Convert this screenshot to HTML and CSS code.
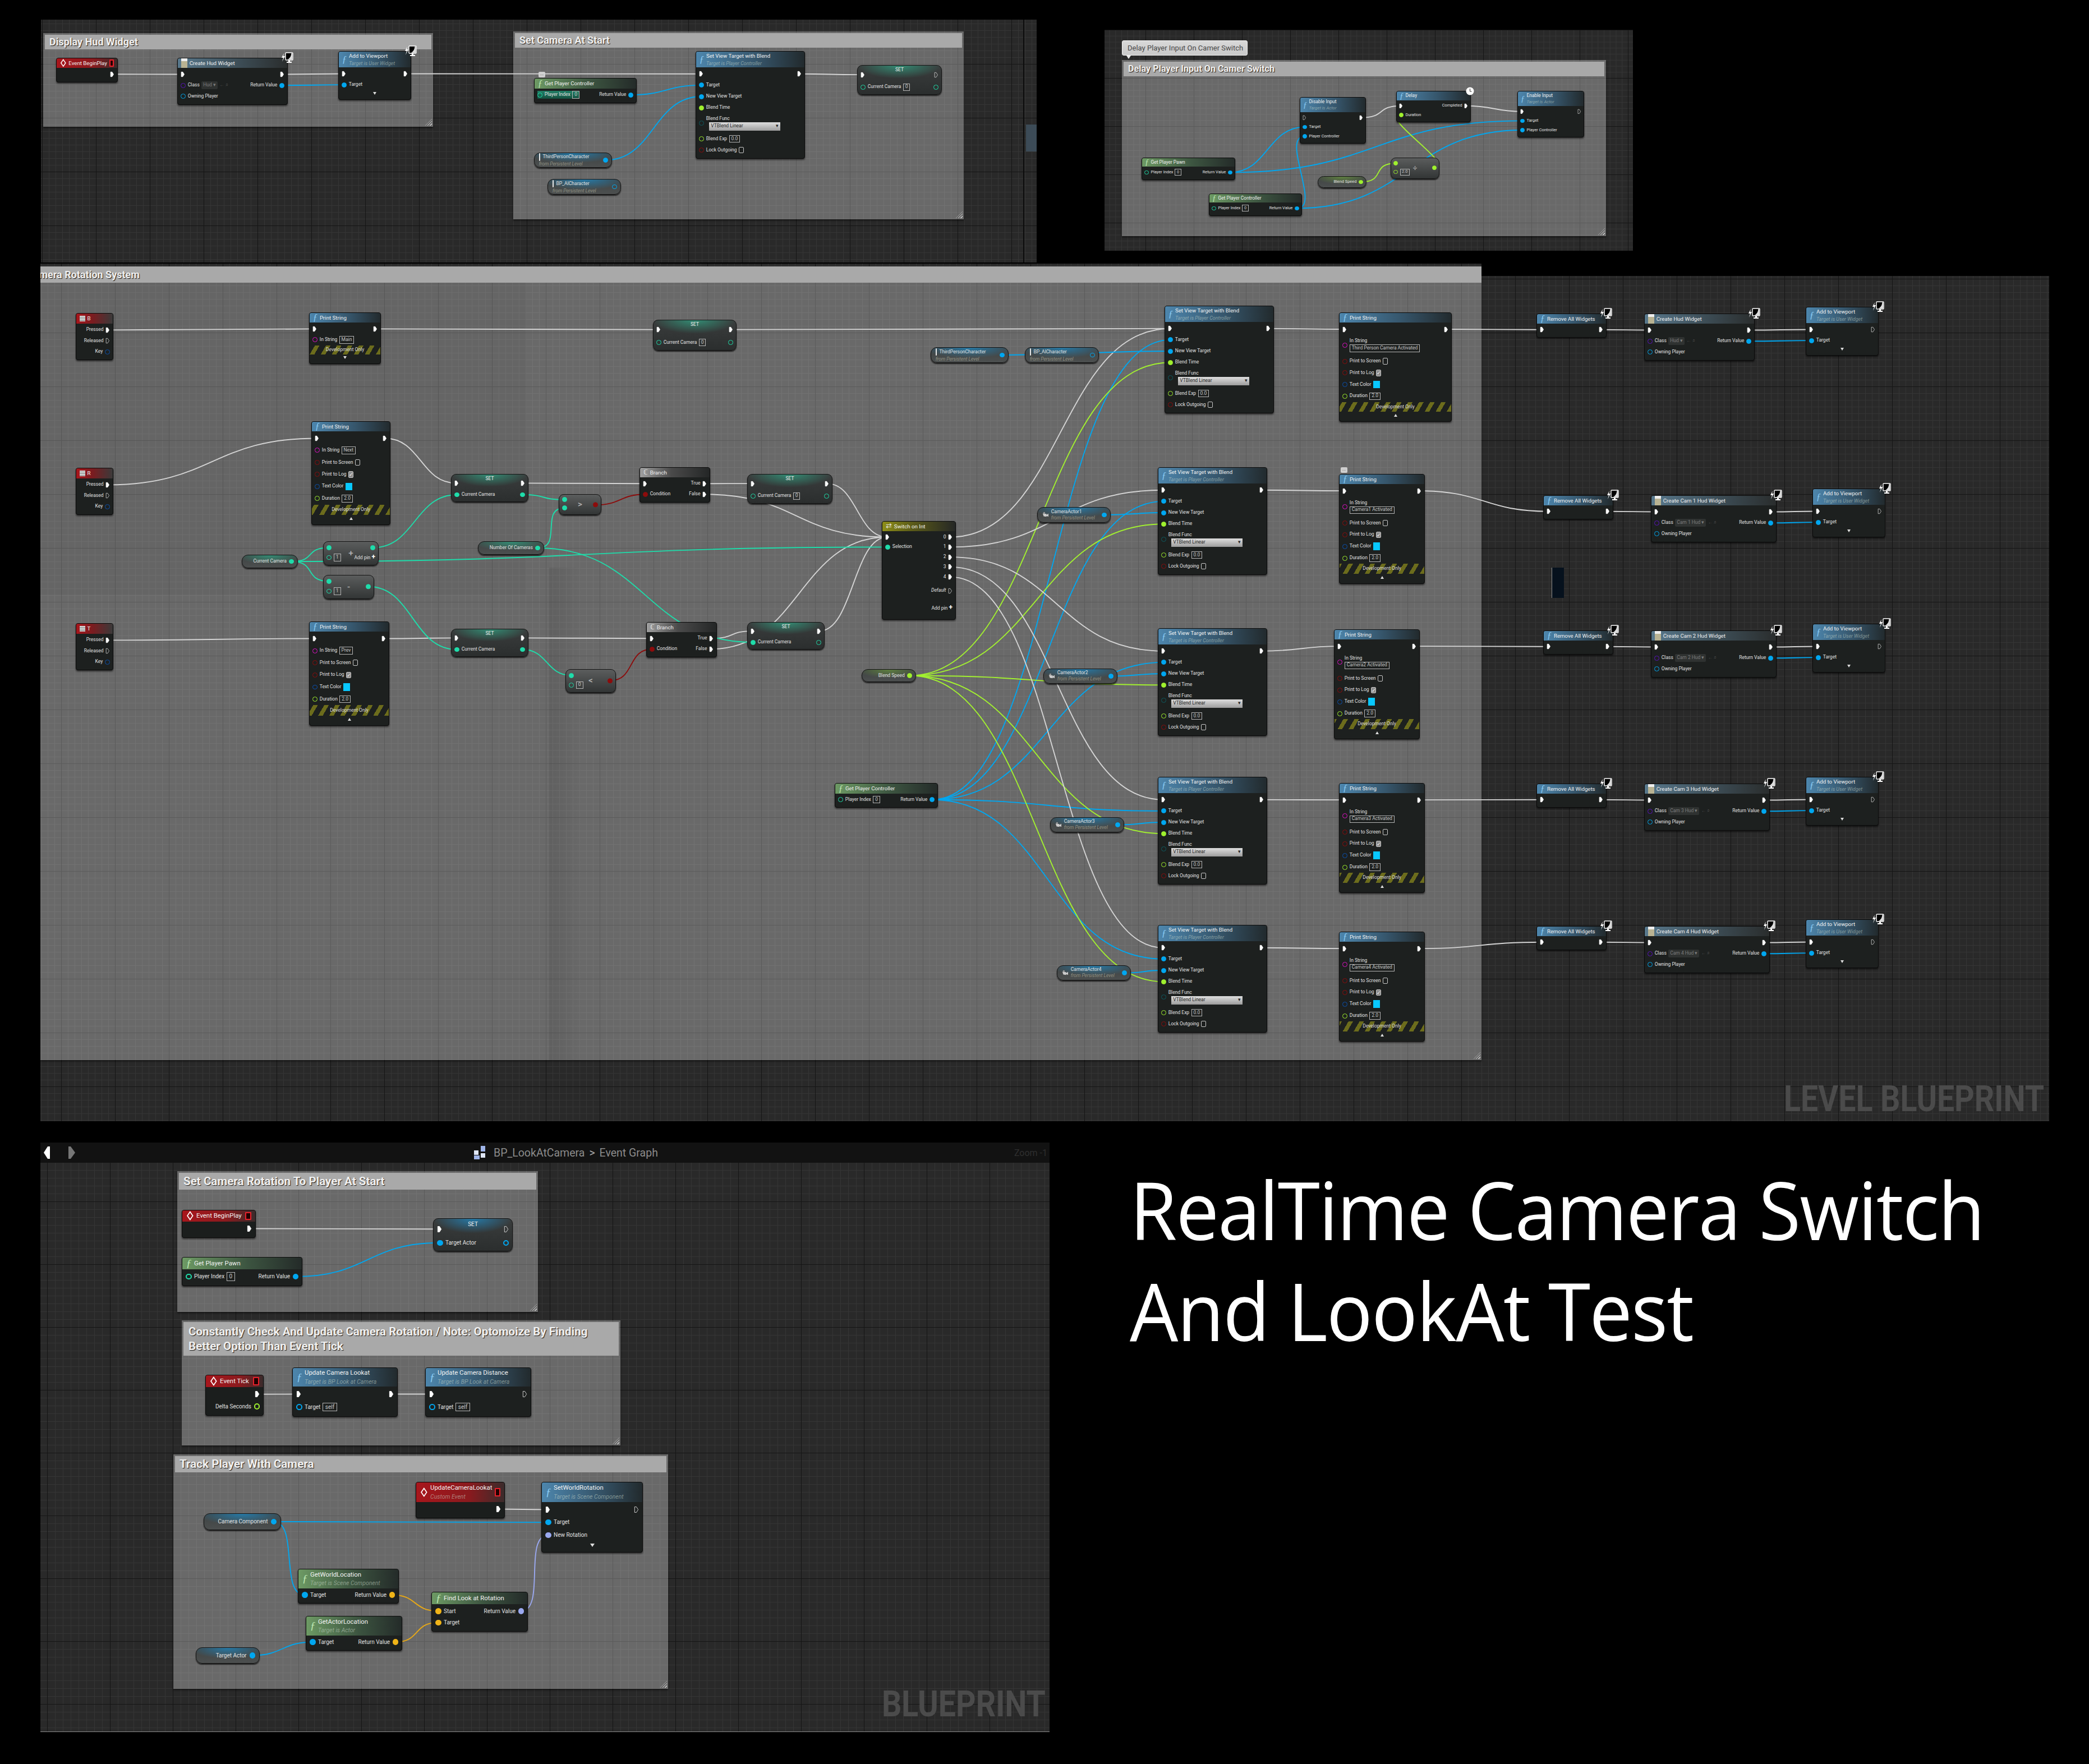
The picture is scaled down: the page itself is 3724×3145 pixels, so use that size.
FILE: index.html
```html
<!DOCTYPE html>
<html lang="en">

<head>
    <meta charset="UTF-8" />
    <title>RealTime Camera Switch And LookAt Test</title>
    <link rel="stylesheet" href="styles.css">
</head>

<body>
    <div id="stage">
        <div class="panel panel-a"></div>
        <div class="divider-a"></div>
        <div class="scroll-a"></div>
        <div class="panel panel-b"></div>
        <div class="panel panel-top"></div>
        <div class="panel panel-c"></div>
        <div class="panel panel-d">
            <div class="graph-bar">
                <svg class="nav" viewBox="0 0 60 26">
                    <path d="M2 13 9 2h4v22H9z" fill="#fff" />
                    <path d="M58 13 50 2h-4v22h4z" fill="#777" />
                </svg>
                <div class="crumb">
                    <svg class="bp-icon" viewBox="0 0 24 26">
                        <rect x="14" y="1" width="8" height="10" fill="#9fb4e8" />
                        <rect x="2" y="9" width="8" height="8" fill="#dfe6f6" />
                        <rect x="14" y="14" width="8" height="8" fill="#dfe6f6" />
                        <rect x="2" y="18" width="10" height="7" fill="#9fb4e8" />
                    </svg>
                    <span>BP_LookAtCamera</span>
                    <span class="sep">&gt;</span>
                    <span>Event Graph</span>
                </div>
                <div class="zoom-label">Zoom -1</div>
            </div>
        </div>

        <div class="comment cm-hud"><h3>Display Hud Widget</h3></div>
        <div class="comment cm-start"><h3>Set Camera At Start</h3></div>
        <div class="comment cm-delay"><h3>Delay Player Input On Camer Switch</h3></div>
        <div class="comment cm-system"><h3>Camera Rotation System</h3></div>
        <div class="shade shade-1"></div>
        <div class="shade shade-2"></div>
        <div class="comment big cm-rotation"><h3>Set Camera Rotation To Player At Start</h3></div>
        <div class="comment big cm-tick"><h3>Constantly Check And Update Camera Rotation / Note: Optomoize By Finding Better Option Than Event Tick</h3></div>
        <div class="comment big cm-track"><h3>Track Player With Camera</h3></div>

        <div class="bubble">Delay Player Input On Camer Switch</div>
        <div class="note note-1">...</div>
        <div class="note note-2">...</div>
        <div class="black-bar"></div>

        <svg id="wires" width="3724" height="3145"></svg>
        <div id="nodes"></div>

        <div class="mark mark-level">LEVEL BLUEPRINT</div>
        <div class="mark mark-bp">BLUEPRINT</div>
        <h1 class="headline">RealTime Camera Switch<br>And LookAt Test</h1>
    </div>

    <script src="script.js"></script>
</body>

</html>
```

FILE: styles.css
```css
body {
    margin: 0;
    background: #000;
}

#stage {
    position: relative;
    width: 3724px;
    height: 3145px;
    overflow: hidden;
    background: #000;
    font-family: Roboto, sans-serif;
}

/* graph panels */
.panel {
    position: absolute;
    background-color: #292929;
    background-image:
        linear-gradient(90deg, #151515 1px, transparent 1px),
        linear-gradient(#151515 1px, transparent 1px),
        linear-gradient(90deg, #353535 1px, transparent 1px),
        linear-gradient(#353535 1px, transparent 1px);
    background-size: 96px 96px, 96px 96px, 12px 12px, 12px 12px;
}

.panel-a {
    left: 73px;
    top: 35px;
    width: 1775px;
    height: 433px;
    background-position: 2px 79px, 2px 79px, 2px 7px, 2px 7px;
}

.divider-a {
    position: absolute;
    left: 1824px;
    top: 35px;
    width: 2px;
    height: 433px;
    background: #0c0c0c;
}

.scroll-a {
    position: absolute;
    left: 1829px;
    top: 222px;
    width: 19px;
    height: 48px;
    background: #3c4b57;
}

.panel-b {
    left: 1969px;
    top: 53px;
    width: 942px;
    height: 394px;
    background-size: 86px 86px, 86px 86px, 10.75px 10.75px, 10.75px 10.75px;
    background-position: 73px 0, 73px 0, 73px 0, 73px 0;
}

.panel-top {
    left: 72px;
    top: 470px;
    width: 2569px;
    height: 22px;
    background-position: 37px 27px, 37px 27px, 1px 3px, 1px 3px;
}

.panel-c {
    left: 72px;
    top: 492px;
    width: 3581px;
    height: 1507px;
    background-position: 37px 5px, 37px 5px, 1px 5px, 1px 5px;
}

.panel-d {
    left: 72px;
    top: 2037px;
    width: 1799px;
    height: 1050px;
    border-bottom: 1px solid #8a8a8a;
    background-size: 112px 112px, 112px 112px, 14px 14px, 14px 14px;
    background-position: 236px 105px, 236px 105px, 12px 7px, 12px 7px;
}

.graph-bar {
    display: flex;
    align-items: center;
    height: 36px;
    padding: 0 4px 0 4px;
    background: #121212;
    color: #8b8b8b;
    font-size: 19.5px;
}

.nav {
    width: 60px;
    height: 26px;
}

.crumb {
    display: flex;
    align-items: center;
    gap: 8px;
    margin-left: 706px;
}

.bp-icon {
    width: 26px;
    height: 26px;
    margin-right: 4px;
}

.sep {
    color: #aaa;
}

.zoom-label {
    margin-left: auto;
    color: #2f2f2f;
    font-size: 16px;
}

/* comment boxes */
.comment {
    position: absolute;
    overflow: hidden;
    background: rgba(255, 255, 255, 0.3);
    box-shadow: 0 2px 3px rgba(0, 0, 0, 0.55);
}

.comment::after {
    content: '';
    position: absolute;
    right: 2px;
    bottom: 2px;
    width: 12px;
    height: 12px;
    background: repeating-linear-gradient(135deg, transparent 0 2px, #ccc 2px 3px);
    clip-path: polygon(100% 0, 100% 100%, 0 100%);
}

.comment h3 {
    margin: 3px 3px 0 3px;
    padding-left: 8px;
    background: #a9a9a9;
    color: #f0f0f0;
    font-size: 18px;
    font-weight: 700;
    text-shadow: 1px 1px 1px rgba(0, 0, 0, 0.85);
    line-height: 26px;
}

.comment.big h3 {
    font-size: 20.6px;
    line-height: 26px;
}

.cm-hud {
    left: 77px;
    top: 59px;
    width: 695px;
    height: 167px;
}

.cm-start {
    left: 915px;
    top: 56px;
    width: 803px;
    height: 335px;
}

.cm-delay {
    left: 2000px;
    top: 107px;
    width: 863px;
    height: 314px;
}

.cm-delay h3 {
    font-size: 16.2px;
}

.cm-system {
    left: 72px;
    top: 475px;
    width: 2569px;
    height: 1415px;
}

.cm-system h3 {
    margin: 0 0 0 0;
    padding-left: 0;
    text-indent: -24px;
    line-height: 29px;
}

.cm-rotation {
    left: 316px;
    top: 2088px;
    width: 643px;
    height: 251px;
}

.comment.cm-rotation h3 {
    line-height: 30px;
}

.cm-tick {
    left: 324px;
    top: 2354px;
    width: 782px;
    height: 223px;
}

.cm-tick h3 {
    padding: 4px 20px 4px 9px;
}

.cm-track {
    left: 309px;
    top: 2593px;
    width: 882px;
    height: 418px;
}

.comment.cm-track h3 {
    line-height: 29px;
}

.shade {
    position: absolute;
}

.shade-1 {
    left: 72px;
    top: 504px;
    width: 866px;
    height: 556px;
    background: rgba(0, 0, 0, 0.035);
}

.shade-2 {
    left: 979px;
    top: 1012px;
    width: 60px;
    height: 878px;
    background: linear-gradient(90deg, rgba(0, 0, 0, 0.09), transparent);
}

.bubble {
    position: absolute;
    left: 2000px;
    top: 72px;
    width: 224px;
    height: 27px;
    box-sizing: border-box;
    padding-left: 9px;
    border: 1px solid #f4f4f4;
    border-radius: 3px;
    background: linear-gradient(#d8d8d8, #c8c8c8);
    color: #484848;
    font-size: 13px;
    line-height: 25px;
}

.bubble::after {
    content: '';
    position: absolute;
    left: 7px;
    top: 26px;
    border: 4px solid transparent;
    border-top: 6px solid #e8e8e8;
}

.note {
    position: absolute;
    width: 12px;
    height: 10px;
    border-radius: 2px;
    background: #cfcfcf;
    color: #555;
    font-size: 8px;
    line-height: 7px;
    text-align: center;
}

.note-1 {
    left: 960px;
    top: 128px;
}

.note-2 {
    left: 2390px;
    top: 833px;
}

.black-bar {
    position: absolute;
    left: 2766px;
    top: 1012px;
    width: 21px;
    height: 54px;
    border-left: 1px solid #8d8d8d;
    background: #06111d;
}

/* wires */
#wires {
    position: absolute;
    left: 0;
    top: 0;
}

#wires path {
    fill: none;
    stroke-width: 1.9;
}

/* nodes */
.node {
    position: absolute;
    display: flex;
    flex-direction: column;
    box-sizing: border-box;
    border: 1px solid #0b0b0b;
    border-radius: 4px;
    background: #1d201f;
    box-shadow: 0 2px 3px rgba(0, 0, 0, 0.6);
    color: #e2e2e2;
    font-size: 8.5px;
    line-height: 1.15;
    white-space: nowrap;
}

.node.sm {
    font-size: 7.4px;
}

.node.lg {
    font-size: 10px;
}

.head {
    display: flex;
    flex: none;
    align-items: center;
    gap: 0.4em;
    padding: 0 0.6em;
    border-radius: 3px 3px 0 0;
    font-size: 1.14em;
    position: relative;
}

.head b {
    display: block;
    font-weight: 400;
    color: #f2f2f2;
}

.head small {
    display: block;
    margin-top: 0.3em;
    font-size: 0.92em;
    font-style: italic;
    color: rgba(200, 215, 200, 0.55);
}

.fx {
    font-family: "Liberation Serif", serif;
    font-size: 1.7em;
    line-height: 1;
    font-style: italic;
    color: #8ccdf5;
}

.fn .head {
    background: linear-gradient(90deg, #4d86ad, #36566c 55%, #222a2d);
}

.pure .head {
    background: linear-gradient(90deg, #6d9a64, #3c5440 55%, #242b29);
}

.pure .fx {
    color: #bfe8b4;
}

.event .head,
.key .head {
    background: linear-gradient(90deg, #a8161c, #8a1a1e 60%, #3b2b2b);
}

.key .head {
    background: linear-gradient(90deg, #a8161c, #7a1c20 45%, #3a3a3a);
}

.event {
    background: #1b1e1d;
}

.widget .head {
    background: linear-gradient(90deg, #58788c, #3b4a52 60%, #2a2d2d);
}

.branch .head {
    background: linear-gradient(90deg, #a0a0a0, #4a4a4a 45%, #242626);
}

.switch .head {
    background: linear-gradient(90deg, #8e8e18, #5c5c18 40%, #252725);
}

.flag {
    margin-left: auto;
    width: 0.6em;
    height: 0.9em;
    border: 0.22em solid #e5202a;
    border-radius: 1px;
    background: #200;
}

.diamond {
    width: 1.2em;
    height: 1.5em;
    flex: none;
}

.wicon {
    width: 1.15em;
    height: 1.8em;
    flex: none;
    background: linear-gradient(#eee 30%, #b9b393 30%);
}

.keyicon {
    width: 1em;
    height: 1em;
    flex: none;
    background: repeating-linear-gradient(#ddd 0 2px, #777 2px 3px);
}

.swicon {
    font-size: 1.3em;
    line-height: 1;
}

.body {
    display: flex;
    flex: 1;
    min-height: 0;
    flex-direction: column;
    padding: 0.2em 0 0.5em;
}

.row {
    display: flex;
    flex: 1 1 0;
    min-height: 0;
    align-items: center;
    justify-content: space-between;
    padding: 0 0.6em;
}

.row.tall {
    flex: 1.75 1 0;
}

.side {
    display: flex;
    align-items: center;
    gap: 0.45em;
}

.lab {
    display: flex;
    align-items: center;
    gap: 0.4em;
}

.stack .lab {
    flex-direction: column;
    align-items: flex-start;
    gap: 0.15em;
}

.hl .side:first-child {
    background: linear-gradient(#218067, #14503f);
}

.mid .side:last-child .pin {
    transform: translateY(1.1em);
}

.dev {
    flex: 0.85 1 0;
    justify-content: center;
    padding: 0;
    background: repeating-linear-gradient(-60deg, #6c6c1c 0 7px, #1d201f 7px 17px);
    color: #ddd;
}

.tri {
    flex: 0.6 1 0;
    justify-content: center;
}

.tri::before {
    content: '';
    border: 0.4em solid transparent;
}

.tri.up::before {
    border-bottom: 0.6em solid #ddd;
    border-top-width: 0;
}

.tri.down::before {
    border-top: 0.6em solid #ddd;
    border-bottom-width: 0;
}

/* pins */
.pin {
    flex: none;
    display: block;
}

.exec {
    width: 0.9em;
    height: 1.3em;
}

.exec path {
    fill: #fff;
    stroke: #fff;
}

.exec path.open {
    fill: none;
    stroke: #ddd;
}

.dot {
    box-sizing: border-box;
    width: 1.05em;
    height: 1.05em;
    border: 0.2em solid var(--pc);
    border-radius: 50%;
    background: var(--pc);
}

.dot.open {
    background: transparent;
}

.t-b {
    --pc: #00a7f0;
}

.t-c {
    --pc: #1fdcaa;
}

.t-g {
    --pc: #9ff02e;
}

.t-r {
    --pc: #8c0c0c;
}

.t-m {
    --pc: #e010c8;
}

.t-n {
    --pc: #0a50b0;
}

.t-p {
    --pc: #5a12c0;
}

.t-y {
    --pc: #f0b418;
}

.t-v {
    --pc: #9aa8f0;
}

.t-d {
    --pc: #0c5a60;
}

/* pin widgets */
.box {
    padding: 0.1em 0.35em;
    border: 1px solid #b5b5b5;
    color: #c8c8c8;
}

.check {
    box-sizing: border-box;
    display: block;
    width: 1.1em;
    height: 1.35em;
    border: 1px solid #c8c8c8;
    border-radius: 2px;
}

.check.on {
    background: #8c8c8c;
    color: #fff;
    font-size: 1em;
    line-height: 1.2;
    text-align: center;
}

.swatch {
    display: block;
    width: 1.5em;
    height: 1.6em;
    background: #08c8ff;
}

.drop {
    display: flex;
    align-items: center;
    justify-content: space-between;
    box-sizing: border-box;
    width: 15em;
    height: 1.7em;
    margin-left: 0.6em;
    padding: 0 0.4em;
    background: linear-gradient(#dedede, #9d9d9d);
    color: #222;
}

.cls {
    padding: 0.25em 0.35em;
    border-radius: 2px;
    background: #2f3231;
    color: #7d7d7d;
}

.dim {
    color: #4a4a4a;
}

.plus {
    color: #fff;
    font-size: 1.4em;
    font-weight: 700;
    line-height: 0.8;
}

/* variable, set and math nodes */
.set,
.var,
.op {
    border: 1px solid #141414;
    border-radius: 9px;
    box-shadow: 0 2px 2px rgba(0, 0, 0, 0.7);
}

.set {
    background:
        radial-gradient(ellipse 50% 45% at 50% 0, var(--glow), transparent),
        linear-gradient(#3a3d3d, #2b2e2e);
}

.set .body {
    padding: 0.6em 0 0.2em;
}

.settitle {
    position: absolute;
    top: 0.35em;
    left: 0;
    right: 0;
    text-align: center;
    color: #f0f0f0;
}

.op {
    background: linear-gradient(#5b5d5d, #323535);
}

.opsym {
    position: absolute;
    left: 50%;
    top: 50%;
    transform: translate(-50%, -50%);
    color: #b5b5b5;
    font-size: 1.8em;
    font-weight: 500;
}

.var {
    flex-direction: row;
    align-items: center;
    justify-content: flex-end;
    gap: 0.5em;
    padding-right: 0.7em;
    border-radius: 11px;
    background:
        radial-gradient(ellipse 60% 70% at 50% 0, var(--glow), transparent),
        linear-gradient(#3e4242, #4c4f4f);
}

.var.left {
    justify-content: flex-start;
    padding-left: 0.9em;
}

.var.left .pin {
    margin-left: auto;
}

.var small {
    display: block;
    margin-top: 0.15em;
    font-style: italic;
    font-size: 1em;
    color: rgba(215, 215, 190, 0.5);
}

.var-text {
    position: relative;
}

.actor {
    display: inline-block;
    width: 0.3em;
    height: 1.6em;
    margin-right: 0.5em;
    border-radius: 2px;
    background: #e8e8e8;
    vertical-align: middle;
}

.camicon {
    width: 1.4em;
    height: 1.4em;
    flex: none;
}

.glow-b {
    --glow: rgba(30, 140, 200, 0.75);
}

.glow-c {
    --glow: rgba(45, 190, 150, 0.6);
}

.glow-g {
    --glow: rgba(120, 180, 60, 0.55);
}

/* badges */
.monitor {
    position: absolute;
    top: -11px;
    right: -11px;
    width: 22px;
    height: 20px;
}

.clock {
    position: absolute;
    top: -8px;
    right: -7px;
    width: 15px;
    height: 15px;
}

/* captions */
.mark {
    position: absolute;
    color: #4b4b4b;
    font-size: 64px;
    font-weight: 700;
    line-height: 1;
    transform-origin: 0 0;
    white-space: nowrap;
}

.mark-level {
    left: 3180px;
    top: 1928px;
    transform: scaleX(0.865);
}

.mark-bp {
    left: 1572px;
    top: 3007px;
    transform: scaleX(0.865);
}

.headline {
    position: absolute;
    left: 2014px;
    top: 2066px;
    margin: 0;
    color: #fff;
    font-family: "Open Sans", sans-serif;
    font-size: 143px;
    font-weight: 400;
    line-height: 180px;
    letter-spacing: -2px;
    transform: scaleX(0.955);
    transform-origin: 0 0;
    white-space: nowrap;
}
```

FILE: script.js
```js
// Nodes and wires of the three graphs, positions are stage pixels.
// Pin letters: lower case = connected (filled), upper case = not connected.
const WIRE = { x: '#d4d4d4', b: '#00a7f0', c: '#1fdcaa', g: '#a2f030', r: '#8c0c0c', y: '#e6a818', v: '#9aa8f0' };

const list = [];
const wires = [];
let size = '';

function pin(id, type) {
    if (!type) return '';
    const low = type.toLowerCase();
    const open = type !== low;
    if (low === 'x') {
        return `<svg class="pin exec" data-pin="${id}" viewBox="0 0 10 14"><path class="${open ? 'open' : ''}" d="M1.5 1.5h3.5l3.5 5.5-3.5 5.5H1.5z"/></svg>`;
    }
    return `<span class="pin dot t-${low}${open ? ' open' : ''}" data-pin="${id}"></span>`;
}

const box = t => `<span class="box">${t}</span>`;
const check = on => on ? '<span class="check on">&#10003;</span>' : '<span class="check"></span>';
const swatch = '<span class="swatch"></span>';
const drop = '<span class="drop">VTBlend Linear<span>&#9662;</span></span>';
const cls = t => `<span class="cls">${t} &#9662;</span><span class="dim">&#8592; &#8981;</span>`;

const xx = ['x', '', '', '', 'x'];
const xX = ['x', '', '', '', 'X'];
const dev = { dev: 1 };
const up = { tri: 'up' };
const down = { tri: 'down' };

const DIAMOND = '<svg class="diamond" viewBox="0 0 12 16"><path d="M6 1.5 10.5 8 6 14.5 1.5 8z" fill="none" stroke="#fff" stroke-width="1.6"/></svg>';
const MONITOR = '<svg class="monitor" viewBox="0 0 22 20"><path d="M5 2 1 10h3l-2 7 5-10H4z" fill="#fff"/><rect x="8" y="1" width="13" height="13" rx="1" fill="#000" stroke="#fff" stroke-width="1.4"/><path d="M20.3 1.8v11.5h-8.5c4-2.500 6.500-6.500 6.500-11.500z" fill="#ddd"/><rect x="13" y="14" width="3" height="3" fill="#fff"/><rect x="10" y="17" width="9" height="2" fill="#fff"/></svg>';
const CLOCK = '<svg class="clock" viewBox="0 0 15 15"><circle cx="7.5" cy="7.5" r="7" fill="#fff"/><path d="M7.5 3v5h3" fill="none" stroke="#333"/></svg>';
const CAMERA = '<svg class="camicon" viewBox="0 0 14 14"><path d="M1 4l8 1v6L3 10zM9 7l4-3v7L9 9z" fill="#ccc"/><circle cx="4" cy="3" r="2" fill="#999"/></svg>';

const ICONS = {
    fn: '<i class="fx">&#402;</i>',
    pure: '<i class="fx">&#402;</i>',
    event: DIAMOND,
    widget: '<span class="wicon"></span>',
    key: '<span class="keyicon"></span>',
    branch: '<span class="swicon">&#8450;</span>',
    switch: '<span class="swicon">&#8644;</span>'
};

function rowHtml(id, i, r) {
    if (r.dev) return '<div class="row dev"><span>Development Only</span></div>';
    if (r.tri) return `<div class="row tri ${r.tri}"></div>`;
    const [lp, ll = '', w = '', rl = '', rp, c = ''] = r;
    const lab = ll || w ? `<div class="lab">${ll ? `<span>${ll}</span>` : ''}${w}</div>` : '';
    return `<div class="row ${c}"><div class="side">${pin(`${id}.L${i}`, lp)}${lab}</div>` +
        `<div class="side">${rl ? `<span>${rl}</span>` : ''}${pin(`${id}.R${i}`, rp)}</div></div>`;
}

// standard node: kind, id, left, top, width, height, title bar height, title, subtitle, rows, extras
function N(k, id, x, y, w, h, t, title, sub, rows, extra = '') {
    const flag = extra.includes('flag') ? '<span class="flag"></span>' : '';
    const badge = extra.includes('mon') ? MONITOR : extra.includes('clock') ? CLOCK : '';
    const head = `<div class="head" style="height:${t}px">${ICONS[k] || ''}<div><b>${title}</b>${sub ? `<small>${sub}</small>` : ''}</div>${flag}</div>`;
    const body = `<div class="body">${rows.map((r, i) => rowHtml(id, i, r)).join('')}</div>`;
    list.push(`<div class="node ${k} ${size}" style="left:${x}px;top:${y}px;width:${w}px;height:${h}px">${head}${body}${badge}</div>`);
}

function SET(id, x, y, w, h, rows, glow = 'c') {
    list.push(`<div class="node set glow-${glow} ${size}" style="left:${x}px;top:${y}px;width:${w}px;height:${h}px"><div class="body">${rows.map((r, i) => rowHtml(id, i, r)).join('')}</div><div class="settitle">SET</div></div>`);
}

function OP(id, x, y, w, h, sym, rows) {
    list.push(`<div class="node op ${size}" style="left:${x}px;top:${y}px;width:${w}px;height:${h}px"><div class="body">${rows.map((r, i) => rowHtml(id, i, r)).join('')}</div><div class="opsym">${sym}</div></div>`);
}

function VAR(id, x, y, w, h, label, sub, p, icon = '') {
    const glow = p.toLowerCase();
    const ico = icon === 'cam' ? CAMERA : icon === 'pawn' ? '<span class="actor"></span>' : '';
    list.push(`<div class="node var glow-${glow} ${sub ? 'left' : ''} ${size}" style="left:${x}px;top:${y}px;width:${w}px;height:${h}px">` +
        `${icon === 'cam' ? ico : ''}<div class="var-text">${icon === 'pawn' ? ico : ''}${label}${sub ? `<small>${sub}</small>` : ''}</div>${pin(`${id}.R0`, p)}</div>`);
}

const W = (a, b, c = 'x') => wires.push([a, b, c]);

const SVT = (id, x, y) => N('fn', id, x, y, 195, 192, 28, 'Set View Target with Blend', 'Target is Player Controller', [
    xx, ['b', 'Target'], ['b', 'New View Target'], ['g', 'Blend Time'],
    ['D', 'Blend Func', drop, '', '', 'tall stack'], ['G', 'Blend Exp', box('0.0')], ['R', 'Lock Outgoing', check(0)]
]);

const PRINT = (id, x, y, w, h, text, stacked) => N('fn', id, x, y, w, h, 17, 'Print String', '', [
    xx, ['M', 'In String', box(text), '', '', stacked ? 'tall stack' : ''],
    ['R', 'Print to Screen', check(0)], ['R', 'Print to Log', check(1)],
    ['N', 'Text Color', swatch], ['G', 'Duration', box('2.0')], dev, up
]);

const CREATE = (id, x, y, w, title, c) => N('widget', id, x, y, w, 84, 17, title, '', [
    xx, ['P', 'Class', cls(c), 'Return Value', 'b'], ['B', 'Owning Player']
], 'mon');

const ADDVP = (id, x, y, last) => N('fn', id, x, y, 130, 87, 28, 'Add to Viewport', 'Target is User Widget', [
    last ? xX : xx, ['b', 'Target'], down
], 'mon');

const KEY = (id, y, k) => N('key', id, 135, y, 67, 84, 18, k, '', [
    ['', '', '', 'Pressed', 'x'], ['', '', '', 'Released', 'X'], ['', '', '', 'Key', 'N']
]);

/* ---- top left graph ---- */
N('event', 'a1', 100, 103, 110, 44, 17, 'Event BeginPlay', '', [['', '', '', '', 'x']], 'flag');
CREATE('a2', 316, 103, 197, 'Create Hud Widget', 'Hud');
ADDVP('a3', 603, 91);
N('pure', 'a4', 952, 139, 183, 45, 18, 'Get Player Controller', '', [['C', 'Player Index', box('0'), 'Return Value', 'b', 'hl']]);
VAR('a6', 952, 272, 139, 27, 'ThirdPersonCharacter', 'from Persistent Level', 'b', 'pawn');
VAR('a8', 976, 319, 131, 28, 'BP_AICharacter', 'from Persistent Level', 'B', 'pawn');
SVT('a5', 1240, 91);
SET('a7', 1528, 116, 151, 53, [xX, ['C', 'Current Camera', box('0'), '', 'C']]);
W('a1.R0', 'a2.L0'); W('a2.R0', 'a3.L0'); W('a2.R1', 'a3.L1', 'b'); W('a3.R0', 'a5.L0');
W('a4.R0', 'a5.L1', 'b'); W('a6.R0', 'a5.L2', 'b'); W('a5.R0', 'a7.L0');

/* ---- delay graph ---- */
size = 'sm';
N('fn', 'b1', 2317, 173, 118, 83, 26, 'Disable Input', 'Target is Actor', [['X', '', '', '', 'x'], ['b', 'Target'], ['b', 'Player Controller']]);
N('fn', 'b2', 2489, 162, 133, 56, 16, 'Delay', '', [['x', '', '', 'Completed', 'x'], ['g', 'Duration']], 'clock');
N('fn', 'b3', 2705, 162, 119, 83, 26, 'Enable Input', 'Target is Actor', [xX, ['b', 'Target'], ['b', 'Player Controller']]);
N('pure', 'b4', 2035, 281, 167, 40, 15, 'Get Player Pawn', '', [['C', 'Player Index', box('0'), 'Return Value', 'b']]);
N('pure', 'b5', 2155, 345, 166, 40, 15, 'Get Player Controller', '', [['C', 'Player Index', box('0'), 'Return Value', 'b']]);
VAR('b6', 2349, 314, 87, 21, 'Blend Speed', '', 'g');
OP('b7', 2479, 281, 87, 38, '&#247;', [['g', '', '', '', 'g', 'mid'], ['G', '', box('2.0')]]);
size = '';
W('b1.R0', 'b2.L0'); W('b2.R0', 'b3.L0'); W('b4.R0', 'b1.L1', 'b'); W('b4.R0', 'b3.L1', 'b');
W('b5.R0', 'b1.L2', 'b'); W('b5.R0', 'b3.L2', 'b'); W('b6.R0', 'b7.L0', 'g'); W('b7.R0', 'b2.L1', 'g');

/* ---- camera rotation system ---- */
KEY('kb', 558, 'B');
KEY('kr', 834, 'R');
KEY('kt', 1111, 'T');
N('fn', 'pb', 551, 557, 128, 92, 17, 'Print String', '', [xx, ['M', 'In String', box('Main')], dev, down]);
PRINT('pr', 555, 751, 141, 185, 'Next');
PRINT('pt', 551, 1108, 143, 186, 'Prev');
VAR('cc', 431, 989, 100, 24, 'Current Camera', '', 'c');
OP('plus', 576, 965, 99, 43, '+', [['c', '', '', '', 'c'], ['C', '', box('1'), 'Add pin <span class="plus">+</span>']]);
OP('minus', 576, 1025, 91, 43, '-', [['c', '', '', '', 'c', 'mid'], ['C', '', box('1')]]);
SET('sr', 804, 845, 138, 50, [xx, ['c', 'Current Camera', '', '', 'c']]);
SET('st', 804, 1121, 138, 50, [xx, ['c', 'Current Camera', '', '', 'c']]);
VAR('nc', 852, 965, 118, 24, 'Number Of Cameras', '', 'c');
OP('gt', 996, 881, 76, 37, '&gt;', [['c', '', '', '', 'r', 'mid'], ['c']]);
OP('lt', 1008, 1193, 90, 42, '&lt;', [['c', '', '', '', 'r', 'mid'], ['C', '', box('0')]]);
N('branch', 'br1', 1140, 833, 126, 63, 17, 'Branch', '', [['x', '', '', 'True', 'x'], ['r', 'Condition', '', 'False', 'x']]);
N('branch', 'br2', 1152, 1109, 126, 63, 17, 'Branch', '', [['x', '', '', 'True', 'x'], ['r', 'Condition', '', 'False', 'x']]);
SET('s0', 1164, 570, 149, 55, [xx, ['C', 'Current Camera', box('0'), '', 'C']]);
SET('s2', 1332, 845, 152, 53, [xx, ['C', 'Current Camera', box('0'), '', 'C']]);
SET('s3', 1332, 1109, 138, 49, [xx, ['c', 'Current Camera', '', '', 'C']]);
N('switch', 'sw', 1572, 929, 132, 176, 17, 'Switch on Int', '', [
    ['x', '', '', '0', 'x'], ['c', 'Selection', '', '1', 'x'], ['', '', '', '2', 'x'], ['', '', '', '3', 'x'], ['', '', '', '4', 'x'],
    ['', '', '', '<i>Default</i>', 'X', 'tall'], ['', '', '', 'Add pin <span class="plus">+</span>', '', 'tall']
]);
VAR('bs', 1536, 1193, 97, 23, 'Blend Speed', '', 'g');
N('pure', 'gpc', 1488, 1396, 184, 44, 18, 'Get Player Controller', '', [['C', 'Player Index', box('0'), 'Return Value', 'b']]);
VAR('tp', 1659, 619, 139, 28, 'ThirdPersonCharacter', 'from Persistent Level', 'b', 'pawn');
VAR('ai', 1827, 619, 132, 28, 'BP_AICharacter', 'from Persistent Level', 'B', 'pawn');
VAR('ca1', 1849, 904, 131, 28, 'CameraActor1', 'from Persistent Level', 'b', 'cam');
VAR('ca2', 1860, 1192, 132, 27, 'CameraActor2', 'from Persistent Level', 'b', 'cam');
VAR('ca3', 1872, 1457, 132, 27, 'CameraActor3', 'from Persistent Level', 'b', 'cam');
VAR('ca4', 1884, 1721, 132, 27, 'CameraActor4', 'from Persistent Level', 'b', 'cam');
SVT('v1', 2076, 545);
SVT('v2', 2064, 833);
SVT('v3', 2064, 1120);
SVT('v4', 2064, 1385);
SVT('v5', 2064, 1649);
PRINT('p1', 2387, 557, 201, 195, 'Third Person Camera Activated', true);
PRINT('p2', 2387, 845, 153, 196, 'Camera1 Activated', true);
PRINT('p3', 2378, 1122, 153, 196, 'Camera2 Activated', true);
PRINT('p4', 2387, 1396, 153, 196, 'Camera3 Activated', true);
PRINT('p5', 2387, 1661, 153, 196, 'Camera4 Activated', true);

const HUDS = [
    [2739, 559, 2931, 197, 'Create Hud Widget', 'Hud', 3219, 547],
    [2751, 883, 2943, 224, 'Create Cam 1 Hud Widget', 'Cam 1 Hud', 3231, 871],
    [2751, 1124, 2943, 224, 'Create Cam 2 Hud Widget', 'Cam 2 Hud', 3231, 1112],
    [2739, 1397, 2931, 224, 'Create Cam 3 Hud Widget', 'Cam 3 Hud', 3219, 1385],
    [2739, 1651, 2931, 224, 'Create Cam 4 Hud Widget', 'Cam 4 Hud', 3219, 1639]
];
HUDS.forEach((h, i) => {
    const n = i + 1;
    N('fn', `rm${n}`, h[0], h[1], 125, 43, 17, 'Remove All Widgets', '', [xx], 'mon');
    CREATE(`cw${n}`, h[2], h[1], h[3], h[4], h[5]);
    ADDVP(`av${n}`, h[6], h[7], true);
    W(`v${n}.R0`, `p${n}.L0`);
    W(`p${n}.R0`, `rm${n}.L0`);
    W(`rm${n}.R0`, `cw${n}.L0`);
    W(`cw${n}.R0`, `av${n}.L0`);
    W(`cw${n}.R1`, `av${n}.L1`, 'b');
    W(`sw.R${i}`, `v${n}.L0`);
    W('gpc.R0', `v${n}.L1`, 'b');
    W('bs.R0', `v${n}.L3`, 'g');
    if (i > 0) W(`ca${i}.R0`, `v${n}.L2`, 'b');
});

W('kb.R0', 'pb.L0'); W('kr.R0', 'pr.L0'); W('kt.R0', 'pt.L0');
W('pb.R0', 's0.L0'); W('s0.R0', 'v1.L0');
W('tp.R0', 'v1.L2', 'b');
W('pr.R0', 'sr.L0'); W('sr.R0', 'br1.L0'); W('br1.R0', 's2.L0'); W('br1.R1', 'sw.L0'); W('s2.R0', 'sw.L0');
W('pt.R0', 'st.L0'); W('st.R0', 'br2.L0'); W('br2.R0', 's3.L0'); W('br2.R1', 'sw.L0'); W('s3.R0', 'sw.L0');
W('cc.R0', 'plus.L0', 'c'); W('cc.R0', 'minus.L0', 'c'); W('cc.R0', 'sw.L1', 'c');
W('plus.R0', 'sr.L1', 'c'); W('minus.R0', 'st.L1', 'c');
W('sr.R1', 'gt.L0', 'c'); W('nc.R0', 'gt.L1', 'c'); W('nc.R0', 's3.L1', 'c'); W('st.R1', 'lt.L0', 'c');
W('gt.R0', 'br1.L1', 'r'); W('lt.R0', 'br2.L1', 'r');

/* ---- look at camera graph ---- */
size = 'lg';
N('event', 'd1', 324, 2157, 132, 50, 20, 'Event BeginPlay', '', [['', '', '', '', 'x']], 'flag');
SET('d2', 772, 2172, 142, 59, [xX, ['b', 'Target Actor', '', '', 'B']], 'b');
N('pure', 'd3', 324, 2241, 215, 52, 21, 'Get Player Pawn', '', [['C', 'Player Index', box('0'), 'Return Value', 'b']]);
N('event', 'd4', 366, 2451, 104, 73, 21, 'Event Tick', '', [['', '', '', '', 'x'], ['', '', '', 'Delta Seconds', 'G']], 'flag');
N('fn', 'd5', 521, 2438, 188, 88, 33, 'Update Camera Lookat', 'Target is BP Look at Camera', [xx, ['B', 'Target', box('self')]]);
N('fn', 'd6', 758, 2438, 189, 88, 33, 'Update Camera Distance', 'Target is BP Look at Camera', [xX, ['B', 'Target', box('self')]]);
N('event', 'd7', 741, 2642, 159, 65, 35, 'UpdateCameraLookat', 'Custom Event', [['', '', '', '', 'x']], 'flag');
N('fn', 'd8', 965, 2642, 181, 126, 35, 'SetWorldRotation', 'Target is Scene Component', [xX, ['b', 'Target'], ['v', 'New Rotation'], down]);
VAR('d9', 363, 2698, 138, 30, 'Camera Component', '', 'b');
N('pure', 'd10', 531, 2797, 180, 62, 34, 'GetWorldLocation', 'Target is Scene Component', [['b', 'Target', '', 'Return Value', 'y']]);
N('pure', 'd11', 545, 2881, 172, 62, 34, 'GetActorLocation', 'Target is Actor', [['b', 'Target', '', 'Return Value', 'y']]);
N('pure', 'd12', 769, 2838, 172, 71, 21, 'Find Look at Rotation', '', [['y', 'Start', '', 'Return Value', 'v'], ['y', 'Target']]);
VAR('d13', 349, 2937, 114, 29, 'Target Actor', '', 'b');
size = '';
W('d1.R0', 'd2.L0'); W('d3.R0', 'd2.L1', 'b'); W('d4.R0', 'd5.L0'); W('d5.R0', 'd6.L0'); W('d7.R0', 'd8.L0');
W('d9.R0', 'd8.L1', 'b'); W('d9.R0', 'd10.L0', 'b'); W('d13.R0', 'd11.L0', 'b');
W('d10.R0', 'd12.L0', 'y'); W('d11.R0', 'd12.L1', 'y'); W('d12.R0', 'd8.L2', 'v');

document.getElementById('nodes').innerHTML = list.join('');

// wires are measured from the rendered pins
const stage = document.getElementById('stage').getBoundingClientRect();
const centre = key => {
    const el = document.querySelector(`[data-pin="${key}"]`);
    if (!el) return null;
    const r = el.getBoundingClientRect();
    return [r.left + r.width / 2 - stage.left, r.top + r.height / 2 - stage.top];
};

document.getElementById('wires').innerHTML = wires.map(([a, b, c]) => {
    const p = centre(a);
    const q = centre(b);
    if (!p || !q) return '';
    const t = Math.max(Math.abs(q[0] - p[0]) * 0.5, 45);
    const d = `M${p[0]} ${p[1]}C${p[0] + t} ${p[1]} ${q[0] - t} ${q[1]} ${q[0]} ${q[1]}`;
    return `<path d="${d}" stroke="${WIRE[c]}"/>`;
}).join('');
```
